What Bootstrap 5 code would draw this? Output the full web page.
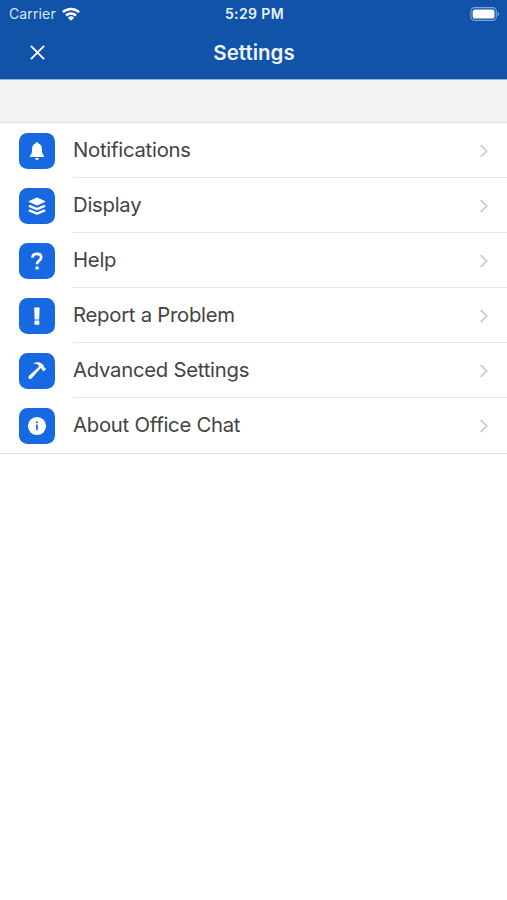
<!DOCTYPE html>
<html lang="en">
<head>
<meta charset="utf-8">
<meta name="viewport" content="width=device-width, initial-scale=1">
<title>Settings</title>
<link href="https://cdn.jsdelivr.net/npm/bootstrap@5.3.0/dist/css/bootstrap.min.css" rel="stylesheet">
<style>
body { font-family: Inter, "Liberation Sans", sans-serif; color: #434343; }
.app-header { background: #1153a8; height: 80px; border-bottom: 1px solid #8fb4e0; }
.status-bar { height: 27px; padding: 0 7px 0 9px; font-size: 14px; line-height: 27px; }
.status-bar > * { flex: 1 1 0; }
.carrier { color: #d9e6f8; letter-spacing: .13px; gap: 6px; }
.clock { font-weight: 600; letter-spacing: .4px; color: #e9f1fc; }
.title-bar { height: 51px; padding: 0 28px 0 29px; }
.title-bar h1 { padding-top: 2px; font-size: 20.5px; font-weight: 600; color: #eef4fd; letter-spacing: 0; }
.close-btn, .bar-end { width: 17px; height: 17px; }
.spacer-band { height: 43px; background: #f2f2f2; border-bottom: 1px solid #e2e2e2; }
.settings-list { border-bottom: 1px solid #dedede; }
.settings-row { height: 55px; padding-left: 19px; color: inherit; }
.tile { width: 36px; height: 36px; border-radius: 8.5px; background: #1669e0; }
.row-body { height: 55px; margin-left: 18px; padding: 1px 18px 0 0; font-size: 20.3px; letter-spacing: -.25px; border-bottom: 1px solid #e6e6e6; }
.settings-row:last-child .row-body { border-bottom-color: transparent; }
</style>
</head>
<body class="bg-white">
<header class="app-header text-white">
  <div class="status-bar d-flex align-items-center">
    <div class="carrier d-flex align-items-center"><span>Carrier</span>
      <svg width="18" height="14" viewBox="0 0 18 14" fill="none" stroke="#fff" stroke-width="2.5"><path d="M.9 5.2a11.6 11.6 0 0 1 16.2 0M4 8.5a7.2 7.2 0 0 1 10 0"/><path d="M9 13.8 5.9 10.7a4.5 4.5 0 0 1 6.2 0z" fill="#fff" stroke="none"/></svg>
    </div>
    <div class="clock text-center">5:29 PM</div>
    <div class="d-flex justify-content-end">
      <svg width="30" height="14" viewBox="0 0 30 14"><rect x=".9" y=".6" width="25.4" height="12.8" rx="3.8" fill="none" stroke="#7fa6da" stroke-width="1.1"/><rect x="2.7" y="2.4" width="21.8" height="9.2" rx="2.2" fill="#fff"/><path d="M27.7 4.6q3 2.4 0 4.8z" fill="#7fa6da"/></svg>
    </div>
  </div>
  <div class="title-bar d-flex align-items-center justify-content-between">
    <button type="button" class="close-btn btn p-0 border-0 d-flex" aria-label="Close"><svg width="17" height="17" viewBox="0 0 17 17" stroke="#fff" stroke-width="1.9" stroke-linecap="round"><path d="M2.4 2.4 14.6 14.6M14.6 2.4 2.4 14.6"/></svg></button>
    <h1 class="mb-0">Settings</h1>
    <span class="bar-end"></span>
  </div>
</header>
<div class="spacer-band"></div>
<main class="settings-list">
  <a class="settings-row d-flex align-items-center text-decoration-none" href="#">
    <span class="tile d-flex flex-shrink-0"><svg width="36" height="36" viewBox="0 0 36 36" fill="#fff"><path d="M18 9.200c.9 0 1.500.6 1.500 1.400 2.400.8 3.400 2.800 3.400 5.200 0 4 .6 5.600 2.200 7.200v1.100H10.900V23c1.600-1.600 2.200-3.200 2.200-7.200 0-2.400 1-4.400 3.400-5.200 0-.8.6-1.400 1.500-1.400z"/><path d="M16.100 25h3.800a1.900 1.900 0 0 1-3.800 0z"/></svg></span>
    <span class="row-body d-flex flex-grow-1 align-items-center justify-content-between"><span>Notifications</span><svg width="10" height="14" viewBox="0 0 10 14" fill="none" stroke="#cacaca" stroke-width="1.7"><path d="M1.700 1.200 7.700 7l-6 5.800"/></svg></span>
  </a>
  <a class="settings-row d-flex align-items-center text-decoration-none" href="#">
    <span class="tile d-flex flex-shrink-0"><svg width="36" height="36" viewBox="0 0 36 36" fill="#fff"><path d="m18 9.500 8 3.600q.7.400 0 .8l-8 3.600-8-3.600q-.7-.4 0-.8z"/><path d="m10.800 18.200 7.200 2.900 7.200-2.900M10.800 22.700l7.200 2.900 7.200-2.900" fill="none" stroke="#fff" stroke-width="2.400" stroke-linecap="round" stroke-linejoin="round"/></svg></span>
    <span class="row-body d-flex flex-grow-1 align-items-center justify-content-between"><span>Display</span><svg width="10" height="14" viewBox="0 0 10 14" fill="none" stroke="#cacaca" stroke-width="1.7"><path d="M1.700 1.200 7.700 7l-6 5.800"/></svg></span>
  </a>
  <a class="settings-row d-flex align-items-center text-decoration-none" href="#">
    <span class="tile d-flex flex-shrink-0"><svg width="36" height="36" viewBox="0 0 36 36" fill="#fff"><path d="M13.400 14.600c.2-2.300 2-3.700 4.500-3.700 2.600 0 4.300 1.400 4.300 3.500 0 3.100-4.200 3.300-4.200 6.900" fill="none" stroke="#fff" stroke-width="2.700"/><circle cx="18.100" cy="25" r="1.800"/></svg></span>
    <span class="row-body d-flex flex-grow-1 align-items-center justify-content-between"><span>Help</span><svg width="10" height="14" viewBox="0 0 10 14" fill="none" stroke="#cacaca" stroke-width="1.7"><path d="M1.700 1.200 7.700 7l-6 5.800"/></svg></span>
  </a>
  <a class="settings-row d-flex align-items-center text-decoration-none" href="#">
    <span class="tile d-flex flex-shrink-0"><svg width="36" height="36" viewBox="0 0 36 36" fill="#fff"><path d="M15.200 9.400h5.400l-.4 12h-4.600z"/><rect x="15.500" y="22.600" width="4.800" height="4.200" rx=".4"/></svg></span>
    <span class="row-body d-flex flex-grow-1 align-items-center justify-content-between"><span>Report a Problem</span><svg width="10" height="14" viewBox="0 0 10 14" fill="none" stroke="#cacaca" stroke-width="1.7"><path d="M1.700 1.200 7.700 7l-6 5.800"/></svg></span>
  </a>
  <a class="settings-row d-flex align-items-center text-decoration-none" href="#">
    <span class="tile d-flex flex-shrink-0"><svg width="36" height="36" viewBox="0 0 36 36" fill="#fff"><path d="M14.800 10.100c3-1.300 6.600-1 8.900 1.300l1 1.200-.1 1.400 1 .4 1.500 1.600-2.400 2.500-1.800-1.800-.2-1.100-1.200-.3-9 10.100q-1.500 1.300-2.700.1-1.200-1.300.2-2.700l10-9.100-.5-1.400c-1-1.500-2.700-1.800-4.700-1.600z"/></svg></span>
    <span class="row-body d-flex flex-grow-1 align-items-center justify-content-between"><span>Advanced Settings</span><svg width="10" height="14" viewBox="0 0 10 14" fill="none" stroke="#cacaca" stroke-width="1.7"><path d="M1.700 1.200 7.700 7l-6 5.800"/></svg></span>
  </a>
  <a class="settings-row d-flex align-items-center text-decoration-none" href="#">
    <span class="tile d-flex flex-shrink-0"><svg width="36" height="36" viewBox="0 0 36 36"><circle cx="18" cy="18" r="9.100" fill="#fff"/><path d="M17.100 16.400h1.700v5.900h-1.700z" fill="#1669e0"/><circle cx="17.950" cy="14.300" r="1" fill="#1669e0"/></svg></span>
    <span class="row-body d-flex flex-grow-1 align-items-center justify-content-between"><span>About Office Chat</span><svg width="10" height="14" viewBox="0 0 10 14" fill="none" stroke="#cacaca" stroke-width="1.7"><path d="M1.700 1.200 7.700 7l-6 5.800"/></svg></span>
  </a>
</main>
<script src="https://cdn.jsdelivr.net/npm/bootstrap@5.3.0/dist/js/bootstrap.bundle.min.js"></script>
</body>
</html>
